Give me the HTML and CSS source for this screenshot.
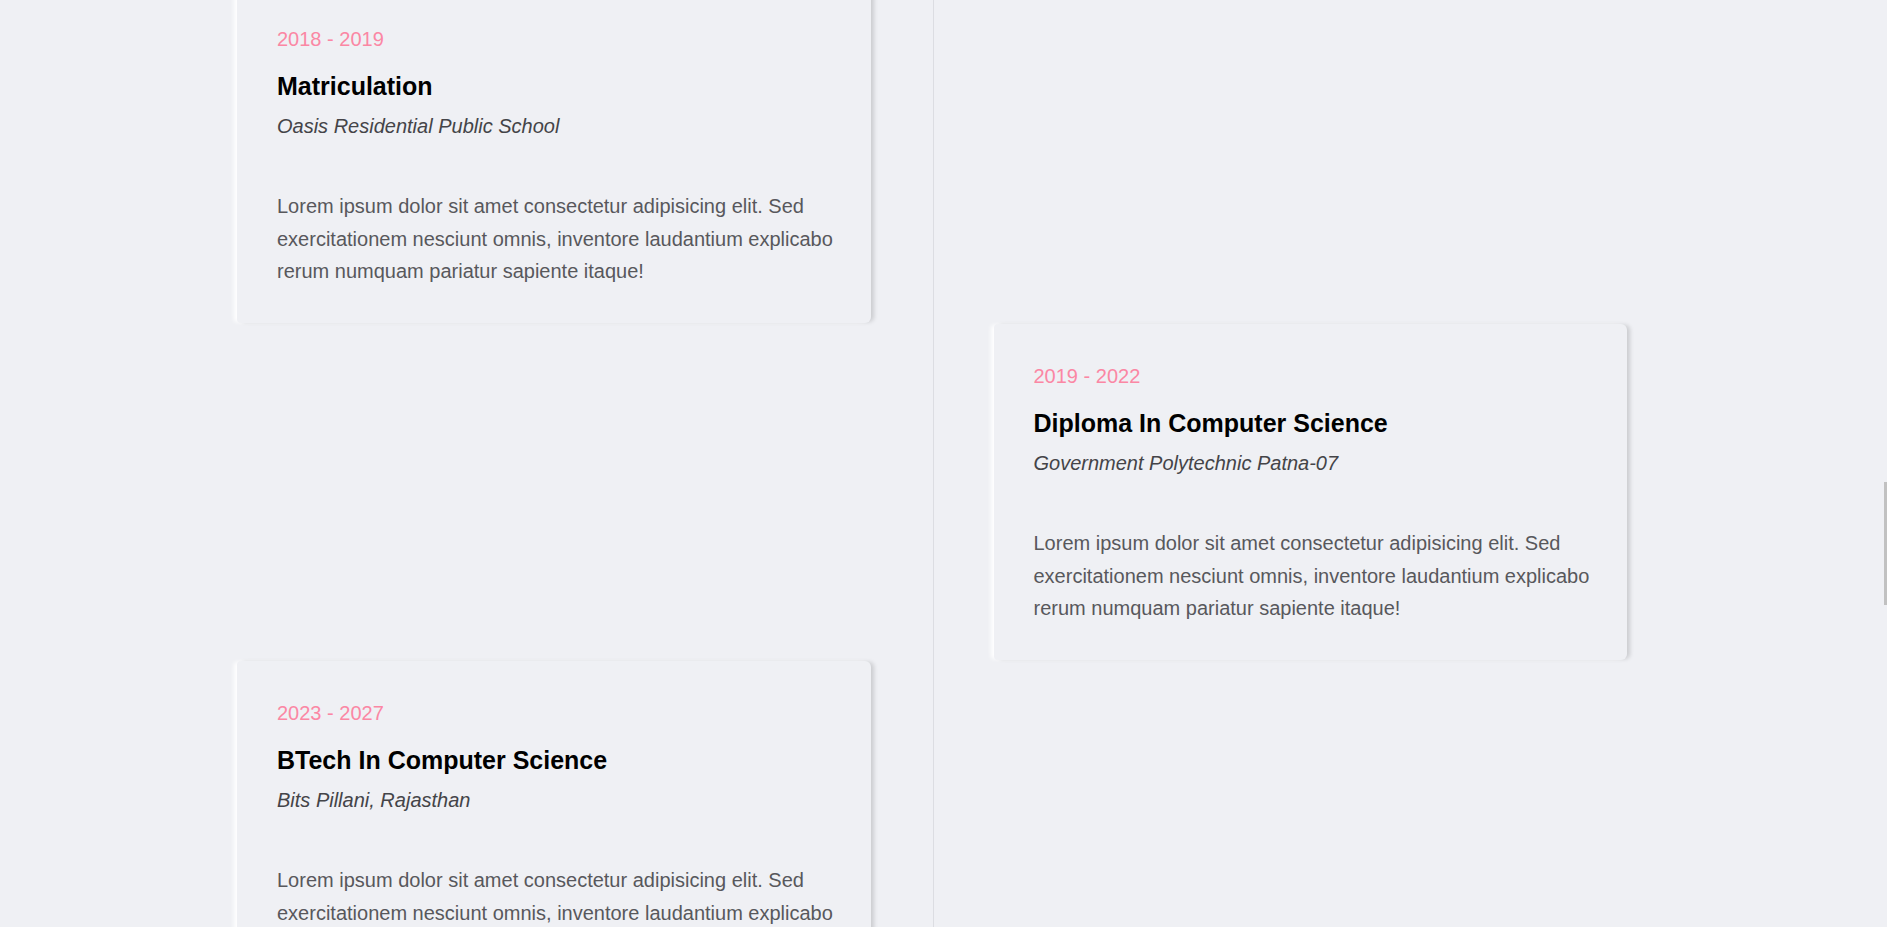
FILE: index.html
```html
<!DOCTYPE html>
<html lang="en">
<head>
<meta charset="utf-8">
<title>Education Timeline</title>
<link rel="stylesheet" href="styles.css">
</head>
<body>
<main class="page">
  <section class="timeline">
    <div class="row row-left">
      <article class="card">
        <p class="date">2018 - 2019</p>
        <h3 class="title">Matriculation</h3>
        <p class="school">Oasis Residential Public School</p>
        <p class="text">Lorem ipsum dolor sit amet consectetur adipisicing elit. Sed exercitationem nesciunt omnis, inventore laudantium explicabo rerum numquam pariatur sapiente itaque!</p>
      </article>
    </div>
    <div class="row row-right">
      <article class="card">
        <p class="date">2019 - 2022</p>
        <h3 class="title">Diploma In Computer Science</h3>
        <p class="school">Government Polytechnic Patna-07</p>
        <p class="text">Lorem ipsum dolor sit amet consectetur adipisicing elit. Sed exercitationem nesciunt omnis, inventore laudantium explicabo rerum numquam pariatur sapiente itaque!</p>
      </article>
    </div>
    <div class="row row-left">
      <article class="card">
        <p class="date">2023 - 2027</p>
        <h3 class="title">BTech In Computer Science</h3>
        <p class="school">Bits Pillani, Rajasthan</p>
        <p class="text">Lorem ipsum dolor sit amet consectetur adipisicing elit. Sed exercitationem nesciunt omnis, inventore laudantium explicabo rerum numquam pariatur sapiente itaque!</p>
      </article>
    </div>
  </section>
</main>
<div class="scroll-thumb"></div>
</body>
</html>
```

FILE: styles.css
```css
html, body {
  margin: 0;
  padding: 0;
  height: 100%;
  overflow: hidden;
  background: #eff0f4;
}

body {
  font-family: "Liberation Sans", Arial, sans-serif;
}

.page {
  padding-left: 237px;
}

.timeline {
  width: 1390px;
  margin-top: -13px;
  display: flex;
  flex-direction: column;
  gap: 1.5px;
  background: linear-gradient(#dcdde2, #dcdde2) no-repeat 695.5px 0 / 1px 100%;
  padding-bottom: 200px;
}

.row {
  display: flex;
  width: 100%;
}

.row-left {
  justify-content: flex-start;
}

.row-right {
  justify-content: flex-end;
}

.card {
  box-sizing: border-box;
  width: 633.5px;
  padding: 41px 30px 35px 40px;
  background: #eff0f4;
  border-radius: 4px 6px 6px 4px;
  box-shadow: 4px 0 4px -1px rgba(0, 0, 0, 0.15), -4px 0 4px -1px #ffffff;
}

.date {
  margin: 0;
  font-size: 20px;
  line-height: 23px;
  color: #fb87a4;
}

.title {
  margin: 21px 0 0;
  font-size: 25px;
  line-height: 29px;
  font-weight: 700;
  color: #000000;
}

.school {
  margin: 14px 0 0;
  font-size: 20px;
  line-height: 23px;
  font-style: italic;
  color: #444448;
}

.text {
  margin: 52px 0 0;
  font-size: 20px;
  line-height: 32.5px;
  color: #58585c;
}

.scroll-thumb {
  position: fixed;
  right: 0;
  top: 482px;
  width: 3px;
  height: 123px;
  background: #c1c1c1;
}
```
